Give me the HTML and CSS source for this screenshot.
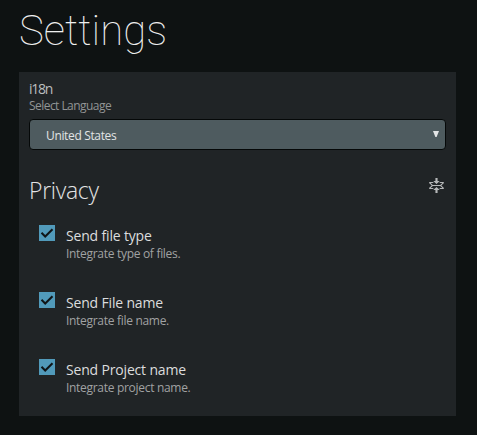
FILE: index.html
```
<!DOCTYPE html>
<html lang="en">
<head>
<meta charset="utf-8">
<title>Settings</title>
<link rel="stylesheet" href="styles.css">
</head>
<body>
<h1 class="title">Settings</h1>
<main class="panel">
  <div class="label">i18n</div>
  <div class="hint">Select Language</div>
  <div class="select"><span class="value">United States</span><svg class="arrow" width="6" height="6" viewBox="0 0 6 6"><path d="M0 0h6L3.6 6H2.4z"/></svg></div>
  <div class="section">
    <h2 class="heading">Privacy</h2>
    <svg class="fold" width="15" height="16" viewBox="0 0 14 16" preserveAspectRatio="none"><path d="M7 9l3 3H8v3H6v-3H4l3-3zm3-6H8V0H6v3H4l3 3 3-3zm4 2c0-.55-.45-1-1-1h-2.5l-1 1h3l-2 2h-7l-2-2h3l-1-1H1c-.55 0-1 .45-1 1l2.5 2.5L0 10c0 .55.45 1 1 1h2.5l1-1h-3l2-2h7l2 2h-3l1 1H13c.55 0 1-.45 1-1l-2.5-2.5L14 5z"/></svg>
  </div>
  <div class="option">
    <svg class="check" width="16" height="16" viewBox="0 0 16 16"><path d="M2.5 7.8L6.2 11.5L13.5 4.2"/></svg>
    <div><div class="name">Send file type</div><div class="desc">Integrate type of files.</div></div>
  </div>
  <div class="option">
    <svg class="check" width="16" height="16" viewBox="0 0 16 16"><path d="M2.5 7.8L6.2 11.5L13.5 4.2"/></svg>
    <div><div class="name">Send File name</div><div class="desc">Integrate file name.</div></div>
  </div>
  <div class="option">
    <svg class="check" width="16" height="16" viewBox="0 0 16 16"><path d="M2.5 7.8L6.2 11.5L13.5 4.2"/></svg>
    <div><div class="name">Send Project name</div><div class="desc">Integrate project name.</div></div>
  </div>
</main>
</body>
</html>
```
FILE: styles.css
```
* { box-sizing: border-box; }
body {
  margin: 0;
  padding: 0 21px 0 19px;
  height: 435px;
  overflow: hidden;
  background: #0e1212;
  color: #d2d3d4;
  font-family: "Open Sans", "Noto Sans", sans-serif;
}
.title {
  margin: 0;
  height: 72px;
  padding-top: 6px;
  font: 100 42px/50px Roboto, sans-serif;
  letter-spacing: 0;
  color: #eeefef;
}
.panel {
  height: 344px;
  padding: 8px 10px 0;
  background: #202426;
}
.label {
  height: 17px;
  font-size: 14px;
  line-height: 17px;
  letter-spacing: -1.3px;
  color: #bcbebf;
}
.hint {
  height: 22px;
  font-size: 12px;
  line-height: 18px;
  letter-spacing: -0.55px;
  color: #929495;
}
.select {
  display: flex;
  align-items: center;
  justify-content: space-between;
  height: 31px;
  padding: 1px 6px 0 16px;
  border: 1px solid #050808;
  border-radius: 4px;
  background: #4e5b5f;
}
.value {
  font-size: 12px;
  font-weight: 500;
  letter-spacing: -0.35px;
  color: #e2e4e5;
}
.arrow { margin-top: -3px; fill: #e3e5e6; }
.section {
  display: flex;
  justify-content: space-between;
  height: 75px;
  padding: 24px 2px 0 0;
}
.heading {
  margin: 0;
  font-size: 23px;
  font-weight: 300;
  line-height: 32px;
  letter-spacing: -0.3px;
  color: #e2e3e4;
}
.fold { margin-top: 4px; fill: #b5b7b8; }
.option {
  display: flex;
  gap: 11px;
  height: 67px;
  padding-left: 10px;
}
.check {
  flex: none;
  background: #519aba;
}
.check path {
  fill: none;
  stroke: #101517;
  stroke-width: 2;
}
.name {
  margin-top: 2px;
  font-size: 14px;
  font-weight: 500;
  line-height: 18px;
  letter-spacing: -0.17px;
  color: #dcddde;
}
.desc {
  margin-top: 1px;
  font-size: 12px;
  line-height: 16px;
  letter-spacing: -0.3px;
  color: #a0a2a3;
}
```
